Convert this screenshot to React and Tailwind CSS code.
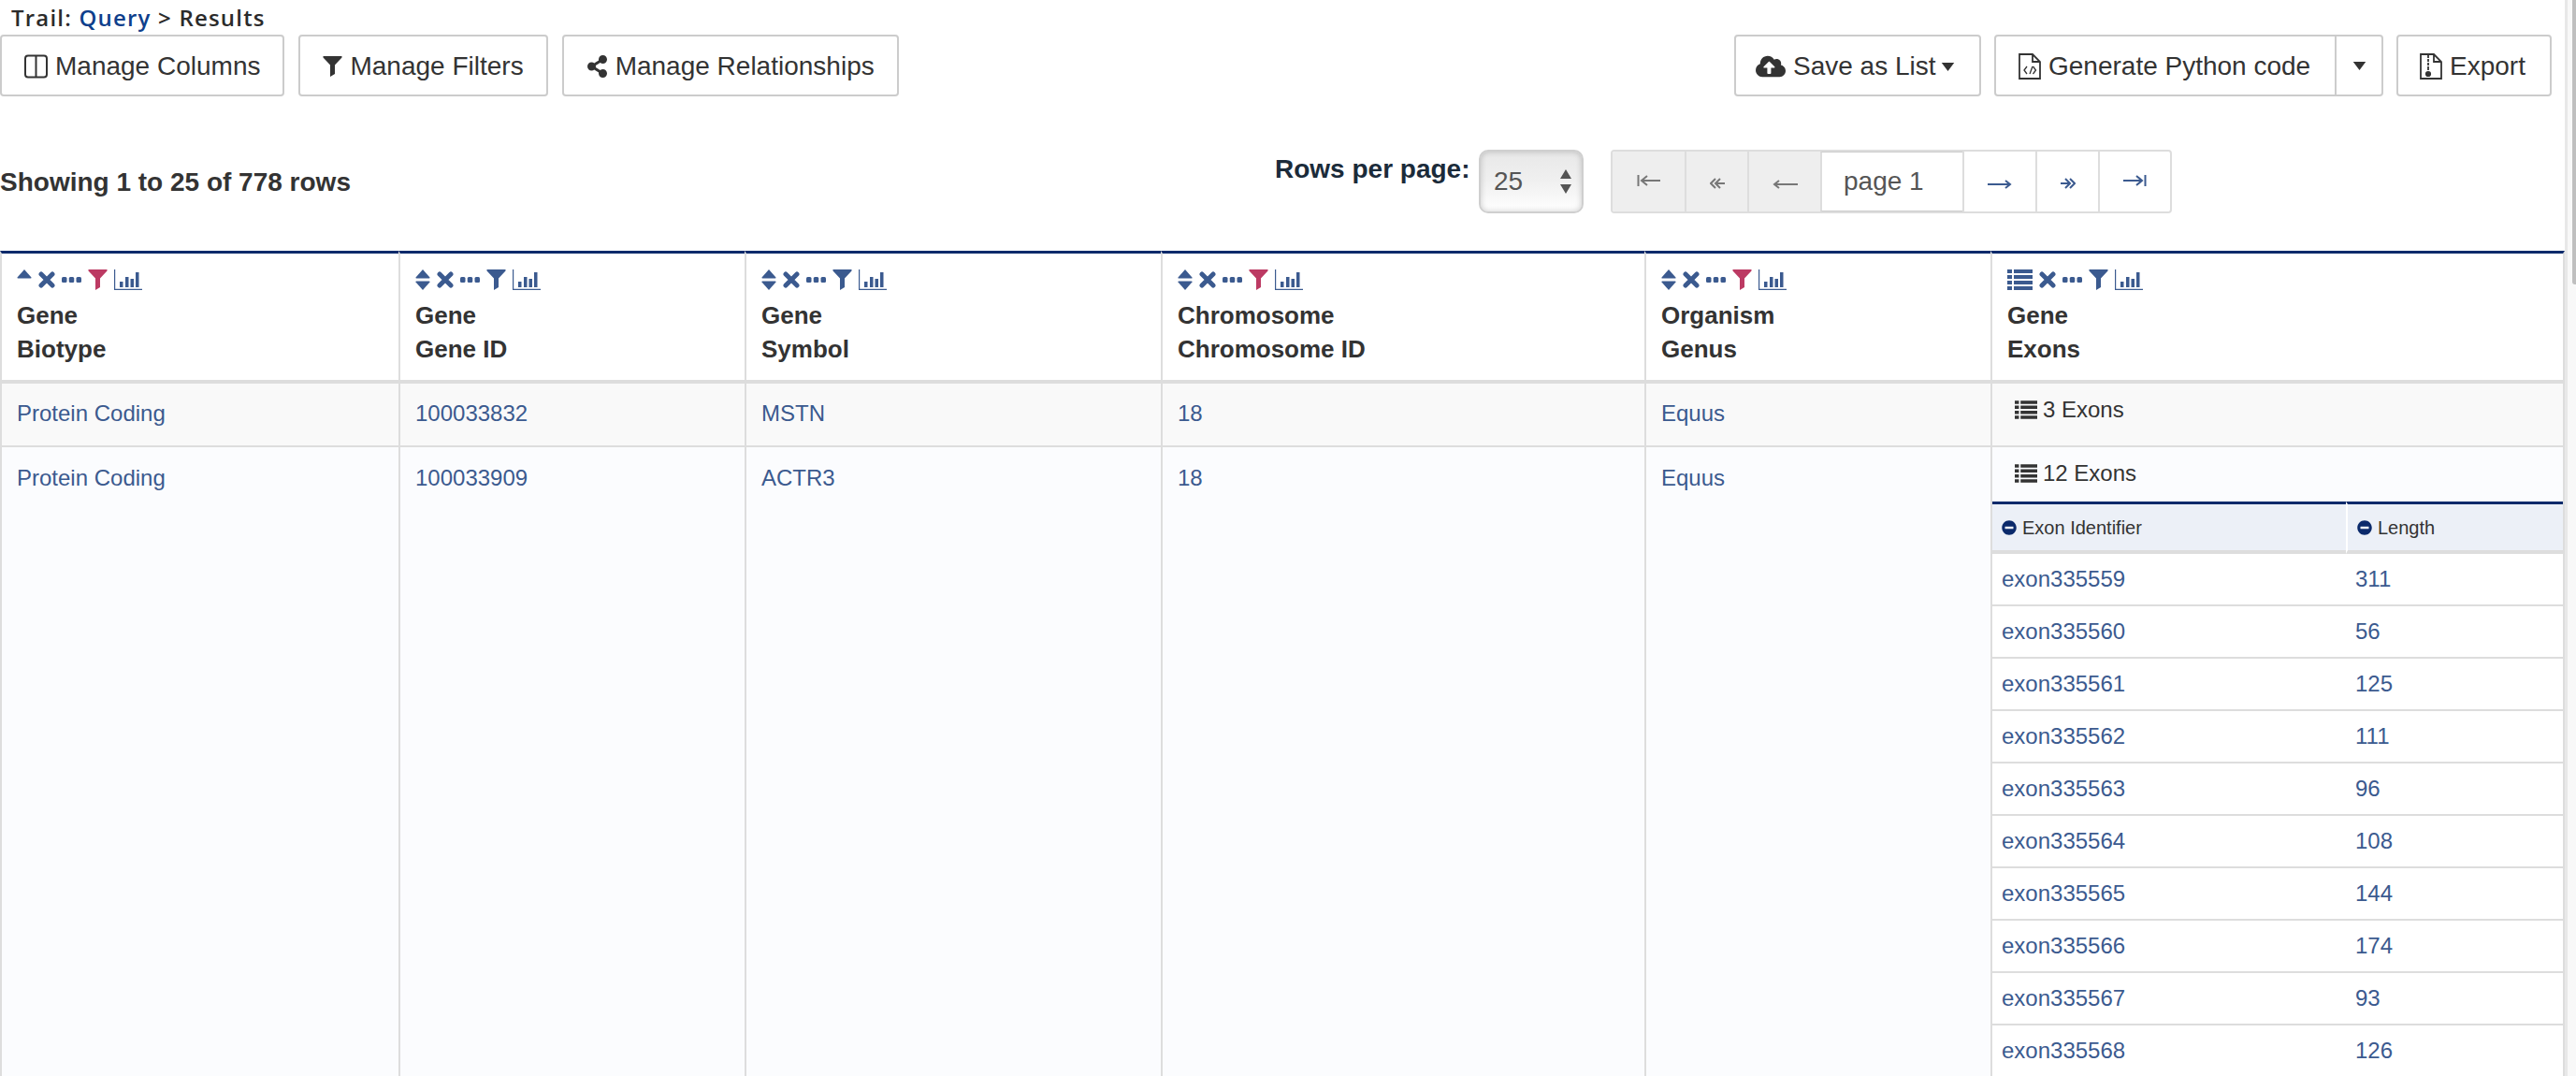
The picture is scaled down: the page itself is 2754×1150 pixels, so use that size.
import { FaCloudUploadAlt, FaShareAlt, FaMinusCircle } from "react-icons/fa";

const columns = [
  { w: "w-[426px]", top: "Gene", bottom: "Biotype", sort: "up", active: true, value: ["Protein Coding", "Protein Coding"] },
  { w: "w-[370px]", top: "Gene", bottom: "Gene ID", sort: "both", value: ["100033832", "100033909"] },
  { w: "w-[445px]", top: "Gene", bottom: "Symbol", sort: "both", value: ["MSTN", "ACTR3"] },
  { w: "w-[517px]", top: "Chromosome", bottom: "Chromosome ID", sort: "both", active: true, value: ["18", "18"] },
  { w: "w-[370px]", top: "Organism", bottom: "Genus", sort: "both", active: true, value: ["Equus", "Equus"] },
];

const exons = [
  ["exon335559", 311],
  ["exon335560", 56],
  ["exon335561", 125],
  ["exon335562", 111],
  ["exon335563", 96],
  ["exon335564", 108],
  ["exon335565", 144],
  ["exon335566", 174],
  ["exon335567", 93],
  ["exon335568", 126],
];

function Funnel({ className }) {
  return (
    <svg viewBox="0 0 21 22" className={className} fill="currentColor">
      <path d="M.5 0h20v1.500L13 9.500v9.500L8 22V9.500L.5 1.500z" />
    </svg>
  );
}

function BarsIcon() {
  return (
    <svg viewBox="0 0 30 22" className="w-[30px] h-[22px] text-[#3b5a8f]" fill="currentColor">
      <path d="M0 0h1.200v20.800H30V22H0z" />
      <path d="M6 13h3.500v6H6zM12 8h3.500v11H12zM17.500 10H21v9h-3.500zM23 3h3.500v16H23z" />
    </svg>
  );
}

function SortIcon({ mode }) {
  return (
    <svg viewBox="0 0 16 22" className="w-[16px] h-[22px] text-[#3b5a8f]" fill="currentColor">
      <path d="M8 0l7.500 8.500q.3 1-.8 1H1.300q-1.100 0-.8-1z" />
      {mode === "both" && <path d="M8 22L.5 13.500q-.3-1 .8-1h13.400q1.100 0 .8 1z" />}
    </svg>
  );
}

function ThickX() {
  return (
    <svg viewBox="0 0 18 18" className="w-[18px] h-[18px] text-[#3b5a8f]" fill="none" stroke="currentColor" strokeWidth="5" strokeLinecap="round">
      <path d="M3 3l12 12M15 3L3 15" />
    </svg>
  );
}

function Dots() {
  return (
    <svg viewBox="0 0 21 6" className="w-[21px] h-[6px] text-[#3b5a8f]" fill="currentColor">
      <rect x="0" y="0" width="5.500" height="6" rx="1.500" />
      <rect x="7.750" y="0" width="5.500" height="6" rx="1.500" />
      <rect x="15.500" y="0" width="5.500" height="6" rx="1.500" />
    </svg>
  );
}

function ListIcon({ className }) {
  return (
    <svg viewBox="0 0 27 22" className={className} fill="currentColor">
      <path d="M0 0h5v4H0zM7 0h20v4H7zM0 6h5v4H0zM7 6h20v4H7zM0 12h5v4H0zM7 12h20v4H7zM0 18h5v4H0zM7 18h20v4H7z" />
    </svg>
  );
}

function ColumnsIcon() {
  return (
    <svg viewBox="0 0 25 26" className="w-[25px] h-[26px]" fill="none" stroke="currentColor" strokeWidth="2">
      <rect x="1" y="1.500" width="23" height="23" rx="3" />
      <path d="M12.500 1.500v23" />
    </svg>
  );
}

function FileIcon({ kind }) {
  return (
    <svg viewBox="0 0 24 28" className="w-[24px] h-[28px]" fill="none" stroke="currentColor" strokeWidth="1.800">
      <path d="M1 1h14l8 8v18H1zM15 1v8h8" />
      {kind === "code" && <path d="M9 14l-3 4 3 4M15 14l-3 8M15.500 14l3 4-3 4" strokeWidth="1.300" />}
      {kind === "zip" && <path d="M9 2v3M9 6v3M9 10v3M9 14v4" />}
      {kind === "zip" && <circle cx="9" cy="22" r="2.200" fill="currentColor" />}
    </svg>
  );
}

function Caret({ className }) {
  return (
    <svg viewBox="0 0 12 8" className={className} fill="currentColor">
      <path d="M0 0h12L6 8z" />
    </svg>
  );
}

function HeaderIcons({ sort, active, list }) {
  return (
    <div className="flex items-center gap-[7px] h-[24px]">
      {list ? <ListIcon className="w-[27px] h-[22px] text-[#3b5a8f]" /> : <SortIcon mode={sort} />}
      <ThickX />
      <Dots />
      <Funnel className={active ? "w-[21px] h-[22px] text-[#bc3a63]" : "w-[21px] h-[22px] text-[#3b5a8f]"} />
      <BarsIcon />
    </div>
  );
}

function ToolButton({ icon, children }) {
  return (
    <button className="h-[66px] px-[24px] pt-[2px] flex items-center gap-[8px] bg-white border-2 border-[#cccccc] rounded-[4px] text-[28px] text-[#333333]">
      {icon}
      {children}
    </button>
  );
}

function PageCell({ w, off, children }) {
  return (
    <div className={`${w} ${off ? "bg-[#eeeeee] text-[#777777]" : "bg-white text-[#3b5a8f]"} flex items-center justify-center border-l-2 border-[#dddddd] first:border-l-0`}>
      {children}
    </div>
  );
}

function Arrow({ d, w, y }) {
  return (
    <svg viewBox={`0 0 ${w} 14`} style={{ width: w, height: 14, marginTop: y }} fill="none" stroke="currentColor" strokeWidth="2">
      <path d={d} />
    </svg>
  );
}

export default function App() {
  return (
    <div className="w-[2754px] h-[1150px] overflow-hidden relative bg-white font-['Liberation_Sans',Arial,sans-serif] text-[#333333]">
      <div className="pl-[12px] h-[37px] pt-[3px] font-['Open_Sans',sans-serif] font-semibold text-[24px] leading-[32px] tracking-[1.2px] text-[#2b2b2b]">
        Trail: <a className="text-[#0f3f8c]">Query</a> &gt; Results
      </div>

      <div className="flex w-[2728px] justify-between">
        <div className="flex gap-[15px]">
          <ToolButton icon={<ColumnsIcon />}>Manage Columns</ToolButton>
          <ToolButton icon={<Funnel className="w-[21px] h-[24px]" />}>Manage Filters</ToolButton>
          <ToolButton icon={<FaShareAlt className="w-[23px] h-[24px]" />}>Manage Relationships</ToolButton>
        </div>
        <div className="flex gap-[14px]">
          <button className="h-[66px] w-[264px] pl-[21px] pt-[2px] flex items-center gap-[8px] bg-white border-2 border-[#cccccc] rounded-[4px] text-[28px]">
            <FaCloudUploadAlt className="w-[32px] h-[32px]" />
            Save as List
            <Caret className="w-[15px] h-[9px] -ml-[3px]" />
          </button>
          <div className="flex h-[66px] w-[416px] border-2 border-[#cccccc] rounded-[4px] text-[28px]">
            <button className="w-[364px] pl-[24px] pt-[2px] flex items-center gap-[8px] border-r-2 border-[#cccccc]">
              <FileIcon kind="code" />
              Generate Python code
            </button>
            <button className="flex-1 flex items-center justify-center">
              <Caret className="w-[15px] h-[9px]" />
            </button>
          </div>
          <button className="h-[66px] w-[166px] pl-[23px] pt-[2px] flex items-center gap-[8px] bg-white border-2 border-[#cccccc] rounded-[4px] text-[28px]">
            <FileIcon kind="zip" />
            Export
          </button>
        </div>
      </div>

      <div className="flex h-[165px] items-start">
        <div className="w-[1363px] pt-[75px] font-bold text-[28px] leading-[34px]">Showing 1 to 25 of 778 rows</div>
        <div className="w-[218px] pt-[61px] font-bold text-[28px] leading-[34px] text-[#1b2b3a]">Rows per page:</div>
        <div className="mt-[57px] w-[112px] h-[68px] flex items-center justify-between pl-[14px] pr-[10px] rounded-[10px] border-2 border-[#cfcfcf] bg-gradient-to-b from-[#e8e8e8] via-[#f0f0f0] to-white shadow-[inset_0_0_6px_rgba(0,0,0,0.2)] text-[28px] text-[#555555]">
          25
          <svg viewBox="0 0 14 26" className="w-[14px] h-[26px] text-[#555555]" fill="currentColor">
            <path d="M7 0l6 10H1zM7 26l-6-10h12z" />
          </svg>
        </div>
        <div className="mt-[57px] ml-[29px] w-[600px] h-[68px] flex border-2 border-[#dddddd] rounded-[4px] overflow-hidden">
          <PageCell w="w-[77px]" off><Arrow w={25} y={-2} d="M1.500 1v12M25 7H6M11 2L5 7l6 5" /></PageCell>
          <PageCell w="w-[67px]" off><Arrow w={16} y={4} d="M16 7H6M6 2L1 7l5 5M11 2L6 7l5 5" /></PageCell>
          <PageCell w="w-[78px]" off><Arrow w={27} y={6} d="M27 7H2M7 3L2 7l5 4" /></PageCell>
          <div className="w-[152px] flex items-center pl-[23px] border-l-2 border-[#dddddd] border-t border-b border-t-[#cccccc] border-b-[#cccccc] text-[28px] text-[#555555]">page 1</div>
          <PageCell w="w-[78px]"><Arrow w={26} y={6} d="M0 7h24M19 3l5 4-5 4" /></PageCell>
          <PageCell w="w-[67px]"><Arrow w={16} y={4} d="M0 7h10M5 2l5 5-5 5M10 2l5 5-5 5" /></PageCell>
          <PageCell w="w-[76px]"><Arrow w={25} y={-2} d="M23.500 1v12M0 7h19M14 2l6 5-6 5" /></PageCell>
        </div>
      </div>

      <table className="table-fixed w-[2742px] border-separate border-spacing-0 text-[24px]">
        <thead>
          <tr className="align-top">
            {columns.map((col) => (
              <th key={col.bottom} className={`${col.w} h-[142px] px-[16px] pt-[16px] border-l-2 border-t-[3px] border-b-[4px] border-l-[#dddddd] border-b-[#dddddd] border-t-[#0b2a6b] text-left font-bold text-[26px] leading-[36px]`}>
                <HeaderIcons sort={col.sort} active={col.active} />
                <div className="mt-[8px]">{col.top}</div>
                <div>{col.bottom}</div>
              </th>
            ))}
            <th className="w-[614px] px-[16px] pt-[16px] border-l-2 border-r-2 border-t-[3px] border-b-[4px] border-l-[#dddddd] border-r-[#dddddd] border-b-[#dddddd] border-t-[#0b2a6b] text-left font-bold text-[26px] leading-[36px]">
              <HeaderIcons list />
              <div className="mt-[8px]">Gene</div>
              <div>Exons</div>
            </th>
          </tr>
        </thead>
        <tbody>
          <tr className="align-top bg-[#f9f9f9]">
            {columns.map((col) => (
              <td key={col.bottom} className="h-[68px] px-[16px] pt-[18px] leading-[28px] border-l-2 border-b-2 border-[#dddddd] text-[#3b5a8f]">{col.value[0]}</td>
            ))}
            <td className="px-[24px] pt-[14px] leading-[28px] border-l-2 border-r-2 border-b-2 border-[#dddddd]">
              <div className="flex items-center gap-[6px]"><ListIcon className="w-[24px] h-[22px]" />3 Exons</div>
            </td>
          </tr>
          <tr className="align-top bg-[#fbfcfe]">
            {columns.map((col) => (
              <td key={col.bottom} className="px-[16px] pt-[19px] leading-[28px] border-l-2 border-[#dddddd] text-[#3b5a8f]">{col.value[1]}</td>
            ))}
            <td className="border-l-2 border-r-2 border-[#dddddd]">
              <div className="h-[58px] pl-[24px] pt-[14px] leading-[28px] flex gap-[6px] items-start">
                <ListIcon className="w-[24px] h-[22px] mt-[3px]" />12 Exons
              </div>
              <table className="table-fixed w-full border-separate border-spacing-0">
                <thead>
                  <tr>
                    <th className="w-[378px] h-[56px] pl-[10px] border-t-[3px] border-t-[#0b2a6b] border-b-[4px] border-b-[#dddddd] bg-[#ecf0f7] text-left font-normal text-[20px]">
                      <div className="flex items-center gap-[6px]"><FaMinusCircle className="w-[16px] h-[16px] text-[#0b2a6b]" />Exon Identifier</div>
                    </th>
                    <th className="pl-[10px] border-t-[3px] border-t-[#0b2a6b] border-b-[4px] border-b-[#dddddd] border-l-2 border-l-white bg-[#ecf0f7] text-left font-normal text-[20px]">
                      <div className="flex items-center gap-[6px]"><FaMinusCircle className="w-[16px] h-[16px] text-[#0b2a6b]" />Length</div>
                    </th>
                  </tr>
                </thead>
                <tbody>
                  {exons.map(([id, length]) => (
                    <tr key={id} className="text-[#3b5a8f] bg-white">
                      <td className="h-[56px] pl-[10px] border-b-2 border-[#dddddd]">{id}</td>
                      <td className="pl-[10px] border-b-2 border-[#dddddd]">{length}</td>
                    </tr>
                  ))}
                </tbody>
              </table>
            </td>
          </tr>
        </tbody>
      </table>

      {/* page scrollbar */}
      <div className="absolute top-0 right-0 bottom-0 w-[12px] bg-[#f8f8f8] border-l-[3px] border-[#e8e8e8]">
        <div className="ml-[5px] w-[4px] h-[304px] bg-[#bfbfbf] rounded-bl-[3px]" />
      </div>
    </div>
  );
}
